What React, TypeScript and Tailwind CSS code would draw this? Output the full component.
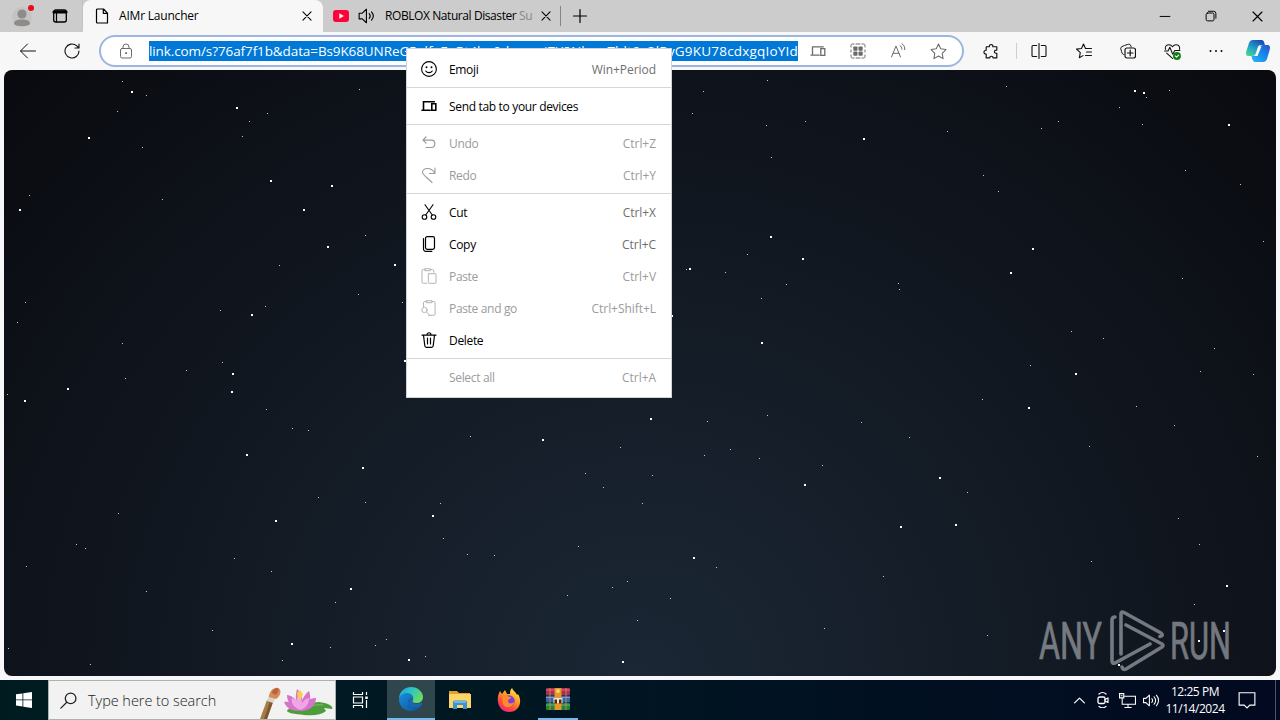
import type { ReactNode } from "react";
import clsx from "clsx";

type Star = [number, number];

const BIG_STARS: Star[] = [
  [132, 92], [237, 108], [89, 138], [271, 181], [332, 186], [20, 210], [304, 210], [328, 247],
  [395, 265], [252, 315], [233, 374], [405, 361], [864, 139], [1135, 91], [1144, 93], [1229, 125],
  [771, 237], [803, 259], [690, 269], [1033, 249], [1011, 273], [672, 316], [762, 343], [1076, 374],
  [25, 401], [68, 389], [232, 392], [247, 455], [363, 468], [276, 521], [433, 516], [351, 589],
  [292, 644], [409, 660], [623, 662], [543, 440], [651, 419], [940, 478], [805, 485], [901, 527],
  [956, 525], [1029, 408], [694, 558], [1227, 586], [1119, 665], [1199, 641], [1224, 631],
];

const SMALL_STARS: Star[] = [
  [122, 81], [146, 95], [117, 111], [267, 113], [249, 121], [242, 136], [359, 89], [142, 147],
  [162, 199], [29, 195], [365, 235], [279, 265], [358, 294], [402, 302], [25, 302], [220, 310],
  [265, 306], [17, 322], [122, 343], [222, 362], [186, 370], [125, 378], [767, 80], [703, 91],
  [692, 113], [766, 125], [805, 121], [947, 131], [771, 157], [1006, 86], [1146, 97], [1169, 90],
  [1119, 107], [1058, 121], [1041, 128], [1142, 124], [983, 175], [998, 191], [1185, 170],
  [1240, 184], [747, 254], [686, 269], [725, 272], [786, 284], [898, 283], [899, 289], [761, 298],
  [1263, 241], [1182, 278], [1071, 331], [1103, 338], [1030, 365], [1214, 348], [1200, 371],
  [1253, 374], [7, 394], [266, 409], [292, 428], [308, 430], [318, 497], [365, 502], [118, 513],
  [440, 503], [443, 538], [76, 544], [85, 548], [26, 566], [234, 558], [271, 571], [146, 591],
  [335, 602], [212, 630], [386, 639], [330, 647], [375, 645], [282, 660], [8, 648], [90, 664],
  [425, 656], [470, 436], [620, 447], [585, 473], [603, 487], [578, 546], [467, 554], [494, 555],
  [627, 581], [612, 587], [567, 595], [637, 620], [707, 421], [767, 415], [861, 422], [909, 437],
  [822, 465], [730, 449], [704, 455], [759, 458], [652, 475], [642, 503], [967, 492], [1136, 406],
  [982, 399], [1174, 425], [1089, 446], [1257, 456], [716, 567], [883, 576], [670, 598],
  [824, 628], [987, 635], [1091, 561], [1199, 544], [1178, 518], [1194, 604],
];

function Icon({ size = 16, className, children }: { size?: number; className?: string; children: ReactNode }) {
  return (
    <svg
      width={size}
      height={size}
      viewBox="0 0 16 16"
      fill="none"
      stroke="currentColor"
      strokeWidth={1}
      strokeLinecap="round"
      strokeLinejoin="round"
      className={clsx("shrink-0", className)}
    >
      {children}
    </svg>
  );
}

function Slot({ className, children }: { className?: string; children?: ReactNode }) {
  return <div className={clsx("flex shrink-0 items-center justify-center", className)}>{children}</div>;
}

const CloseIcon = ({ size = 10 }: { size?: number }) => (
  <Icon size={size}>
    <path strokeWidth={1.7} d="M1.5 1.5l13 13M14.5 1.5l-13 13" />
  </Icon>
);

const DevicesIcon = ({ bold }: { bold?: boolean }) => (
  <Icon>
    <g strokeWidth={bold ? 1.6 : 1.3} strokeLinejoin="miter">
      <path d="M2.500 11V3.800h10.800M1 12.200h8.200" />
      <path d="M10.800 5.700h4v6.600h-4z" />
    </g>
  </Icon>
);

function TitleBar() {
  return (
    <div className="flex h-8 bg-[#cccccc] text-xs text-black">
      <div className="flex w-[83px] rounded-br-md border-r border-[#c2c2c2]">
        <Slot className="w-[46px]">
          <svg width="22" height="26" viewBox="0 0 22 26">
            <circle cx="10" cy="14" r="10" fill="#c3c3c3" />
            <circle cx="10" cy="11" r="4.600" fill="#8e8b89" />
            <path d="M2 21c0-3.500 3-4.500 8-4.500s8 1 8 4.500c-2 3-14 3-16 0z" fill="#8e8b89" />
            <circle cx="19" cy="5" r="3" fill="#e10f18" />
          </svg>
        </Slot>
        <Slot className="w-7">
          <Icon>
            <rect x="1.700" y="2" width="12.600" height="12" rx="2" strokeWidth="1.300" />
            <path d="M2 4h12" strokeWidth="3.200" />
            <path d="M4.500 5v9" strokeWidth="1.200" />
          </Icon>
        </Slot>
      </div>
      <div className="flex w-[240px] items-center rounded-t-lg bg-[#f7f7f7] pl-[11px]">
        <Icon>
          <path strokeWidth="1.200" d="M3.500 1h6l4 4.200V15h-10a1 1 0 0 1-1-1V2a1 1 0 0 1 1-1zM9.300 1v4.300h4.200" />
        </Icon>
        <span className="ml-[9px] flex-1 whitespace-nowrap tracking-[-0.2px]">AIMr Launcher</span>
        <Slot className="w-8">
          <CloseIcon />
        </Slot>
      </div>
      <div className="flex w-[239px] items-center pl-[10px]">
        <svg width="16" height="12" viewBox="0 0 16 12" className="shrink-0">
          <rect width="16" height="12" rx="3" fill="#ff0338" />
          <path d="M6.300 3.300v5.400L10.800 6z" fill="#fff" />
        </svg>
        <Icon size={18} className="ml-[9px]">
          <path d="M1 5.500h2.800L7.500 2v12l-3.700-3.500H1zM10 5.800c1 1.300 1 3.100 0 4.400M12 4.300c2 2.300 2 5.100 0 7.400" />
        </Icon>
        <div className="ml-[9px] w-[148px] whitespace-nowrap tracking-[-0.42px]">
          ROBLOX Natural Disaster <span className="text-[#888]">Su</span>
        </div>
        <Slot className="w-[26px]">
          <CloseIcon />
        </Slot>
        <div className="ml-px h-5 w-px bg-[#858585]" />
      </div>
      <Slot className="w-[35px]">
        <Icon>
          <path strokeWidth="1.200" d="M8 1.500v13M1.500 8h13" />
        </Icon>
      </Slot>
      <div className="flex-1" />
      <Slot className="w-[46px]">
        <Icon size={12}>
          <path strokeWidth="1.300" d="M1.500 8.600h13" />
        </Icon>
      </Slot>
      <Slot className="w-[46px]">
        <Icon size={12}>
          <rect x="1.500" y="4" width="10.500" height="10.500" rx="2" strokeWidth="1.300" />
          <path strokeWidth="1.300" d="M4.500 1.700h7a3 3 0 0 1 3 3V11" />
        </Icon>
      </Slot>
      <Slot className="w-[46px]">
        <CloseIcon size={11} />
      </Slot>
    </div>
  );
}

function AddressBar() {
  return (
    <div className="ml-[5px] flex h-8 w-[865px] shrink-0 items-center rounded-full border-2 border-[#9db6df] bg-white text-[#6b6b6b]">
      <Slot className="ml-[5px] mr-[3px] w-10">
        <Icon>
          <rect x="2.500" y="5.500" width="11" height="9.500" rx="1.500" />
          <path d="M5 5.500V4a3 3 0 0 1 6 0v1.500" />
          <circle cx="8" cy="10.200" r=".6" fill="currentColor" />
        </Icon>
      </Slot>
      <div className="flex h-5 w-[649px] shrink-0 items-center justify-between whitespace-nowrap bg-[#0078d7] text-[13.5px] text-white">
        <span className="tracking-[-0.1px]">link.com/s?76af7f1b&amp;data=Bs9K68UNReG5</span>
        <span className="tracking-[0.1px]">xlfaFnRt4lxr0dxsmni7Y8NkmsThlt6a2</span>
        <span className="tracking-[0.2px]">lRvG9KU78cdxgqIoYId</span>
      </div>
      <Slot className="w-10">
        <DevicesIcon />
      </Slot>
      <Slot className="w-10">
        <Icon>
          <path d="M1 4V2.500A1.500 1.500 0 0 1 2.500 1H4M12 1h1.500A1.500 1.500 0 0 1 15 2.500V4M15 12v1.500a1.500 1.500 0 0 1-1.500 1.500H12M4 15H2.500A1.500 1.500 0 0 1 1 13.500V12M6 1h4M6 15h4M1 7v2M15 7v2" />
          <g fill="currentColor" stroke="none">
            <rect x="3.300" y="3.500" width="4.200" height="4.200" rx=".8" />
            <rect x="8.500" y="3.500" width="4.200" height="4.200" rx=".8" />
            <rect x="3.300" y="8.600" width="4.200" height="4.200" rx=".8" />
            <rect x="8.500" y="8.600" width="4.200" height="4.200" rx=".8" />
          </g>
        </Icon>
      </Slot>
      <Slot className="w-10">
        <Icon>
          <path d="M1.500 14L6 3l4.500 11M3.200 10.300h5.600M10 2.600c1.400.8 2 2 1.900 3.600M12 .8c2 1.200 3 3.200 2.700 5.800" />
        </Icon>
      </Slot>
      <Slot className="w-10">
        <Icon size={17}>
          <path d="M8 1l2.100 4.500 4.900.7-3.500 3.500.8 5L8 12.300l-4.300 2.400.8-5L1 6.200l4.900-.7z" />
        </Icon>
      </Slot>
    </div>
  );
}

function CopilotLogo() {
  return (
    <svg width="26" height="26" viewBox="0 0 26 26">
      <defs>
        <linearGradient id="cpA" x1="0" y1="1" x2="0.700" y2="0">
          <stop offset="0" stopColor="#58d987" />
          <stop offset=".45" stopColor="#23a9c9" />
          <stop offset="1" stopColor="#174fb5" />
        </linearGradient>
        <linearGradient id="cpB" x1="0" y1="1" x2="1" y2="0">
          <stop offset="0" stopColor="#28b9f8" />
          <stop offset=".6" stopColor="#1682e8" />
          <stop offset="1" stopColor="#3050c8" />
        </linearGradient>
      </defs>
      <path d="M8 2h8c3 0 3 2 4 5h-4c-2 0-3 1-3.500 3L11 15c-.6 2-1.500 3-4 3H4c-3 0-3.500-2-2.600-5L4 5c.8-2 2-3 4-3z" fill="url(#cpA)" />
      <path d="M18 24h-7c-3 0-3.500-2-4.500-6h3c2 0 3-1 3.500-3l1.500-5c.6-2 1.500-3 4-3h3.500c3 0 3.500 2 2.600 5L22 21c-.8 2-2 3-4 3z" fill="url(#cpB)" />
      <path d="M14 8.500h2.500L12.500 18H9.800z" fill="#f7f7f7" />
    </svg>
  );
}

function Toolbar() {
  return (
    <div className="flex h-[38px] items-center bg-[#f7f7f7] pl-[6px] text-[#111]">
      <Slot className="w-11">
        <Icon>
          <path d="M15.500 8H.8M7.500 1L.5 8l7 7" />
        </Icon>
      </Slot>
      <Slot className="w-11">
        <Icon>
          <path strokeWidth="1.100" d="M15 8A7 7 0 1 1 12.600 2.700L15 5M15 1v4h-4" />
        </Icon>
      </Slot>
      <AddressBar />
      <Slot className="ml-[5px] w-11">
        <Icon size={17}>
          <path strokeWidth="1.100" d="M3.500 3.500H6C5.500 1 9.500.5 9.300 3.500H13v3.200c-3-.4-3 3.300 0 3V14H9.500c0-2-3.200-2-3.200 0H3v-3.600c-2.800 0-2.800-3.600 0-3.600V4z" />
        </Icon>
      </Slot>
      <div className="ml-[3px] h-4 w-px bg-[#cfcfcf]" />
      <Slot className="w-11">
        <Icon>
          <path strokeWidth="1.100" d="M5.700 2.500H2a1 1 0 0 0-1 1v9a1 1 0 0 0 1 1h3.700M10.300 2.500H14a1 1 0 0 1 1 1v9a1 1 0 0 1-1 1h-3.700M8 .5v15" />
        </Icon>
      </Slot>
      <Slot className="w-[45px]">
        <Icon>
          <path strokeWidth="1.100" d="M9.500 5.500L7.500 1l-2 4.500-5 .6 3.800 3.500-1 5.200 3.700-2.200M10 5.500h5.500M10.500 9h5M9.500 12.500h6" />
        </Icon>
      </Slot>
      <Slot className="w-11">
        <Icon>
          <path d="M3.500 11.500l-1.300-1c-1-3-1.500-4.800-1.500-5.500 0-1.500 7-3.800 8.500-3.800 1 0 1.600 1.300 2 2.800" />
          <rect x="5" y="5" width="10.500" height="10" rx="2" strokeWidth="1.200" />
          <path strokeWidth="1.200" d="M10.200 7.200v5.600M7.400 10H13" />
        </Icon>
      </Slot>
      <Slot className="w-11">
        <Icon size={17}>
          <path d="M1.500 6C0 2 5.500 0 8 3.500 10.500 0 16 2 14.500 6M.5 7.500h3.300L5.500 4l2.700 6.500 2-3.500H15M2.500 9.500L8 14.500" />
          <circle cx="12.200" cy="12.200" r="3.700" fill="#117c15" stroke="none" />
          <path d="M10.600 12.200l1.200 1.100 2-2" stroke="#fff" />
        </Icon>
      </Slot>
      <Slot className="w-11">
        <Icon>
          <path strokeWidth="2" d="M2.500 8h.01M8 8h.01M13.500 8h.01" />
        </Icon>
      </Slot>
      <Slot className="w-[40px]">
        <CopilotLogo />
      </Slot>
    </div>
  );
}

const UndoIcon = () => (
  <Icon>
    <path strokeWidth="1.200" d="M5 2L2 5.200l3 3M2 5.200h8.500c4.500 0 4.500 7.300 0 7.300H5" />
  </Icon>
);

const RedoIcon = () => (
  <Icon>
    <path strokeWidth="1.100" d="M14 1v5.500H8.500M13.800 6.300C10.500-.5 1.200.5 1.500 5.500c.2 2.300 4 4.500 9.500 10" />
  </Icon>
);

type MenuEntry =
  | { kind: "separator" }
  | { kind: "item"; label: string; shortcut?: string; disabled?: boolean; icon?: ReactNode };

const MENU: MenuEntry[] = [
  {
    kind: "item",
    label: "Emoji",
    shortcut: "Win+Period",
    icon: (
      <Icon>
        <circle cx="8" cy="8" r="7.400" strokeWidth="1.100" />
        <path strokeWidth="1.100" d="M4.700 10c1.500 2.200 5.100 2.200 6.600 0" />
        <path strokeWidth="1.900" d="M5.500 6.200h.01M10.500 6.200h.01" />
      </Icon>
    ),
  },
  { kind: "separator" },
  { kind: "item", label: "Send tab to your devices", icon: <DevicesIcon bold /> },
  { kind: "separator" },
  { kind: "item", label: "Undo", shortcut: "Ctrl+Z", disabled: true, icon: <UndoIcon /> },
  { kind: "item", label: "Redo", shortcut: "Ctrl+Y", disabled: true, icon: <RedoIcon /> },
  { kind: "separator" },
  {
    kind: "item",
    label: "Cut",
    shortcut: "Ctrl+X",
    icon: (
      <Icon>
        <circle cx="3.500" cy="13" r="2.300" strokeWidth="1.100" />
        <circle cx="12.500" cy="13" r="2.300" strokeWidth="1.100" />
        <path strokeWidth="1.100" d="M4.700 11L12 .7M11.300 11L4 .7" />
      </Icon>
    ),
  },
  {
    kind: "item",
    label: "Copy",
    shortcut: "Ctrl+C",
    icon: (
      <Icon>
        <rect x="4.500" y=".7" width="9" height="12.600" rx="1.700" strokeWidth="1.200" />
        <path strokeWidth="1.200" d="M2.500 2.700v10.300a2.300 2.300 0 0 0 2.300 2.400h6" />
      </Icon>
    ),
  },
  {
    kind: "item",
    label: "Paste",
    shortcut: "Ctrl+V",
    disabled: true,
    icon: (
      <Icon className="opacity-75">
        <path d="M5.500 15.300H2.300a1.300 1.300 0 0 1-1.300-1.300V2.800a1.300 1.300 0 0 1 1.300-1.300H4M9.500 1.500h2a1.300 1.300 0 0 1 1.300 1.300v1.500M4.200.7h5.200v2H4.200z" />
        <rect x="7.300" y="5.700" width="7.700" height="9.600" rx=".6" />
      </Icon>
    ),
  },
  {
    kind: "item",
    label: "Paste and go",
    shortcut: "Ctrl+Shift+L",
    disabled: true,
    icon: (
      <Icon className="opacity-75">
        <path d="M2.500 6.500V2.800a1.300 1.300 0 0 1 1.300-1.300h1.700M11 1.500h1.800a1.300 1.300 0 0 1 1.300 1.300V14a1.300 1.300 0 0 1-1.300 1.300H7.500M5.600.7H11v2H5.600z" />
        <circle cx="3.500" cy="10" r="2.700" />
        <path d="M5.500 12l3 3" />
      </Icon>
    ),
  },
  {
    kind: "item",
    label: "Delete",
    icon: (
      <Icon>
        <path strokeWidth="1.200" d="M1 3.200h14M2.500 3.200l1.300 10.600a1.700 1.700 0 0 0 1.700 1.500h5a1.700 1.700 0 0 0 1.700-1.500l1.300-10.600M6 3C6 0 10 0 10 3M6.500 6.200v5.700M9.500 6.200v5.700" />
      </Icon>
    ),
  },
  { kind: "separator" },
  { kind: "item", label: "Select all", shortcut: "Ctrl+A", disabled: true },
];

function ContextMenu() {
  return (
    <div className="absolute left-[406px] top-12 z-20 h-[350px] w-[266px] border border-[#d0d3d8] bg-white pt-1 text-xs">
      {MENU.map((entry, i) =>
        entry.kind === "separator" ? (
          <div key={i} className="flex h-[5px] items-center">
            <div className="h-px w-full bg-[#d6d6d6]" />
          </div>
        ) : (
          <div
            key={i}
            className={clsx("flex h-8 items-center pl-[14px] pr-[15px]", entry.disabled ? "text-[#9b9b9b]" : "text-black")}
          >
            <div className="w-4">{entry.icon}</div>
            <span className="ml-3 flex-1 pt-px tracking-[-0.33px]">{entry.label}</span>
            <span className={clsx("pt-px tracking-[-0.05px]", !entry.disabled && "text-[#6e6e6e]")}>{entry.shortcut}</span>
          </div>
        ),
      )}
    </div>
  );
}

function Watermark() {
  return (
    <svg width="206" height="68" viewBox="1034 606 206 68" className="absolute left-[1030px] top-[536px] opacity-45">
      <g fill="#eef0f4" stroke="#eef0f4" strokeWidth=".6" fontFamily="Roboto, sans-serif" fontSize="51">
        <text x="1039" y="659" textLength="63" lengthAdjust="spacingAndGlyphs">ANY</text>
        <text x="1170" y="659" textLength="61" lengthAdjust="spacingAndGlyphs">RUN</text>
      </g>
      <g fill="none" stroke="#eef0f4" strokeWidth="3.600" strokeLinecap="round" strokeLinejoin="round">
        <path d="M1121 654v-40q0-3 3-1.500l37 20.500q3 3-1 3.500M1126 625l36 19q2 1.500 0 3l-36 22q-3 1.500-4-2M1115 617q-3 0-3 3v41q0 3 3 2l35-19" />
      </g>
    </svg>
  );
}

function StarField() {
  return (
    <div className="relative mx-1 h-[606px] overflow-hidden rounded-lg bg-[radial-gradient(ellipse_at_bottom,#1b2735_0%,#090a0f_100%)]">
      <Watermark />
      <svg width="1272" height="606" viewBox="4 70 1272 606" className="relative block" fill="#fff">
        {BIG_STARS.map(([x, y]) => (
          <rect key={`${x}-${y}`} x={x - 1} y={y - 1} width="2" height="2" />
        ))}
        {SMALL_STARS.map(([x, y]) => (
          <rect key={`${x}-${y}`} x={x} y={y} width="1" height="1" opacity=".75" />
        ))}
      </svg>
    </div>
  );
}

function SearchArt() {
  return (
    <svg width="76" height="38" viewBox="258 681 76 38" className="shrink-0">
      <path d="M259 719l7-19 6 2-6 17z" fill="#a77b46" />
      <path d="M263 719l6-18 3 1-6 17z" fill="#7c572f" />
      <path d="M266 701l2-6 7 2-3 6z" fill="#d8d3cb" />
      <path d="M268 697c0-6 5-10 9-9 4 1 3 8-2 11z" fill="#d88b58" />
      <path d="M271 693c0-3 3-5 6-5 1 2 0 5-2 7z" fill="#b86440" />
      <path d="M286 711c2-5 20-8 32-9 8 1 15 4 13 7l-8-1 2 3c-5 4-12 5-22 4-10-1-16-2-17-4z" fill="#4d9d3c" />
      <path d="M303 709c6-3 12-5 19-4" stroke="#80c262" fill="none" />
      <g fill="#d873cc">
        <path d="M298 711c-9 0-13-4-15-9 6-1 11 1 15 9z" />
        <path d="M298 710c-9-4-12-9-12-15 7 1 11 6 12 15z" />
        <path d="M299 711c-5-7-5-15-3-22 6 5 7 14 3 22z" />
        <path d="M300 711c-1-10 3-16 8-20 3 8 0 15-8 20z" />
        <path d="M299 711c3-9 9-13 16-13 0 7-6 13-16 13z" />
      </g>
      <g fill="#f0a6e6">
        <path d="M299 710c-7-3-9-7-8-12 5 2 8 6 8 12z" />
        <path d="M299 710c1-7 4-11 9-12 0 6-3 10-9 12z" />
        <path d="M298 710c-4-5-4-10 0-15 4 5 4 11 0 15z" />
      </g>
      <path d="M296 693l3-3 3 4-2 5h-3z" fill="#f7cf4c" />
    </svg>
  );
}

function EdgeLogo() {
  return (
    <svg width="26" height="26" viewBox="0 0 26 26">
      <defs>
        <linearGradient id="edgeTop" x1="0" y1="0" x2="1" y2=".5">
          <stop offset="0" stopColor="#1a9fda" />
          <stop offset=".5" stopColor="#2fc3c5" />
          <stop offset="1" stopColor="#68dc62" />
        </linearGradient>
        <linearGradient id="edgeLow" x1="0" y1="0" x2="1" y2="1">
          <stop offset="0" stopColor="#198fdd" />
          <stop offset="1" stopColor="#0c5299" />
        </linearGradient>
      </defs>
      <path d="M1 13C1 6 6 1 13 1s12 5 12 10c0 4-3 6-6.500 6-4 0-4.500-1.500-4-2.500 2-3-1-6.500-5-6.500S1.500 10 1 13z" fill="url(#edgeTop)" />
      <path d="M1 13c.5-3.500 4-6 8-6 4 0 7 3 6 6-1-1-5-1-5 3.500 0 4 5.500 6.500 13 3.500-2 3-6 5-10 5C6 25 1 20 1 13z" fill="url(#edgeLow)" />
      <path d="M10 16.500c0-3 2-4.500 4.700-3.500-1.500 2.500 0 4.700 4 4.700 2 0 4-.7 5-1.700.6 1 .3 3-.7 4-7.500 3-13 .5-13-3.500z" fill="#1a66b5" />
    </svg>
  );
}

function ExplorerLogo() {
  return (
    <svg width="22" height="20" viewBox="0 0 22 20">
      <path d="M0 1h8l2 2h11v15H0z" fill="#e0a12f" />
      <path d="M0 4h22v14H0z" fill="#fbd568" />
      <path d="M4 19v-7q0-1.500 1.500-1.500h11q1.500 0 1.500 1.500v7h-4v-4H8v4z" fill="#3b92d1" />
      <path d="M5 11h12v2H5z" fill="#6bb7e6" />
    </svg>
  );
}

function FirefoxLogo() {
  return (
    <svg width="24" height="24" viewBox="0 0 24 24">
      <defs>
        <linearGradient id="ff" x1=".8" y1="0" x2=".2" y2="1">
          <stop offset="0" stopColor="#fff14a" />
          <stop offset=".4" stopColor="#ff9a22" />
          <stop offset=".7" stopColor="#ff4a3e" />
          <stop offset="1" stopColor="#e8208a" />
        </linearGradient>
      </defs>
      <path d="M1 14C0 9 2 5 3 3l2 3 3-4 2 4h3c0-2 0-4 2-6 1 3 4 4 5 7l1-1c5 8 1 18-9 18C6 24 2 20 1 14z" fill="url(#ff)" />
      <circle cx="12" cy="13" r="5.700" fill="#7b3fe0" />
      <path d="M5 9c4-2 6 0 9 0 0 2-3 2-3 4 0 3 4 3 6 1-1 6-9 7-11 2z" fill="#ff8a2a" />
    </svg>
  );
}

function WinRarLogo() {
  return (
    <svg width="24" height="24" viewBox="0 0 24 24">
      <rect y="1" width="24" height="7" rx="1" fill="#b52a4a" />
      <rect y="8.500" width="24" height="7" rx="1" fill="#3863a8" />
      <rect y="16" width="24" height="7" rx="1" fill="#25803a" />
      <path d="M0 3h24M0 10.500h24M0 18h24" stroke="#ffffff" strokeOpacity=".35" />
      <path d="M4 1v22M20 1v22" stroke="#d5a648" strokeOpacity=".7" />
      <rect x="8.500" y="1" width="7" height="22" fill="#e1982c" />
      <path d="M7.500 11h9v5h-9z" fill="#f3e5d0" />
      <path d="M8.500 12.500h2.500v4H8.500zM13 12.500h2.500v4H13z" fill="#4a2515" />
      <circle cx="12" cy="4" r="2" fill="#ffd167" />
    </svg>
  );
}

function Taskbar() {
  return (
    <div className="flex h-10 bg-linear-to-r from-[#001b20] via-[#001722] via-40% to-[#020920] text-white">
      <Slot className="w-12">
        <svg width="16" height="16" viewBox="0 0 16 16" fill="#fff">
          <path d="M0 2.300l6.500-.9v6.100H0zM7.300 1.300L16 0v7.500H7.300zM0 8.300h6.500v6.200L0 13.600zM7.300 8.300H16V16l-8.700-1.300z" />
        </svg>
      </Slot>
      <div className="flex w-[288px] items-center border border-[#aab4ae] bg-[#f2f2f2] pl-[11px] text-[#222]">
        <Icon size={17}>
          <circle cx="10" cy="6" r="5" strokeWidth="1.200" />
          <path strokeWidth="1.200" d="M6.400 9.600L.8 15.200" />
        </Icon>
        <span className="ml-[11px] flex-1 whitespace-nowrap pt-px text-[14.5px] font-light tracking-[-0.05px]">Type here to search</span>
        <SearchArt />
      </div>
      <Slot className="mr-[3px] w-12">
        <Icon>
          <g strokeLinecap="butt" strokeLinejoin="miter" strokeWidth="1.200">
            <path d="M1.500 0v2.500h9V0M1.500 16v-2.500h9V16M1.500 5h9v6h-9zM14.500 0v3M14.500 8v8" />
            <path strokeWidth="2.500" d="M14.500 4.500v2.500" />
          </g>
        </Icon>
      </Slot>
      <Slot className="w-12 border-b-2 border-[#76b9ed] bg-[#2e464c]">
        <EdgeLogo />
      </Slot>
      <Slot className="w-[50px]">
        <ExplorerLogo />
      </Slot>
      <Slot className="w-12">
        <FirefoxLogo />
      </Slot>
      <Slot className="ml-[5px] w-10 border-b-2 border-[#76b9ed]">
        <WinRarLogo />
      </Slot>
      <div className="flex-1" />
      <Slot className="w-6">
        <Icon size={13}>
          <path strokeWidth="1.500" d="M2 11l6-6 6 6" />
        </Icon>
      </Slot>
      <Slot className="w-6">
        <Icon>
          <rect x="3" y="5" width="7" height="6.500" rx="1.500" strokeWidth="1.300" />
          <path strokeWidth="1.200" d="M10 7.500l3-1.500v4.500l-3-1.500M4 2c2-1.800 5-1.800 7 0M4 14.500c2 1.500 5 1.500 7 0" />
        </Icon>
      </Slot>
      <Slot className="w-6">
        <Icon size={17}>
          <g strokeLinejoin="miter">
            <path d="M5 4h10.500v7.500H3V6M8.500 11.500v3M5.500 14.500h6" />
            <path d="M.5 1.500h4v4h-4zM2 3.500h1" />
          </g>
        </Icon>
      </Slot>
      <Slot className="w-6">
        <Icon size={17}>
          <path d="M.5 6h2.300L6 3v10L2.800 10H.5zM8.300 6.200c.9 1.100.9 2.500 0 3.600M10.400 4.500c1.800 2.200 1.800 4.800 0 7M12.600 3c2.600 3.200 2.600 6.800 0 10" />
        </Icon>
      </Slot>
      <div className="flex w-16 flex-col items-center justify-center whitespace-nowrap text-xs leading-[17px] tracking-[-0.45px]">
        <span>12:25 PM</span>
        <span>11/14/2024</span>
      </div>
      <Slot className="w-10">
        <Icon size={18}>
          <path strokeLinejoin="miter" d="M1 1.500h14v11H10.500L8 15l-2.500-2.500H1z" />
        </Icon>
      </Slot>
      <div className="ml-2 mr-1 w-px bg-[#4a5568]" />
    </div>
  );
}

export default function App() {
  return (
    <div className="relative flex h-[720px] w-[1280px] flex-col overflow-hidden bg-[#f7f7f9] font-['Open_Sans','Noto_Sans',sans-serif]">
      <TitleBar />
      <Toolbar />
      <StarField />
      <div className="h-1 shrink-0" />
      <Taskbar />
      <ContextMenu />
    </div>
  );
}
